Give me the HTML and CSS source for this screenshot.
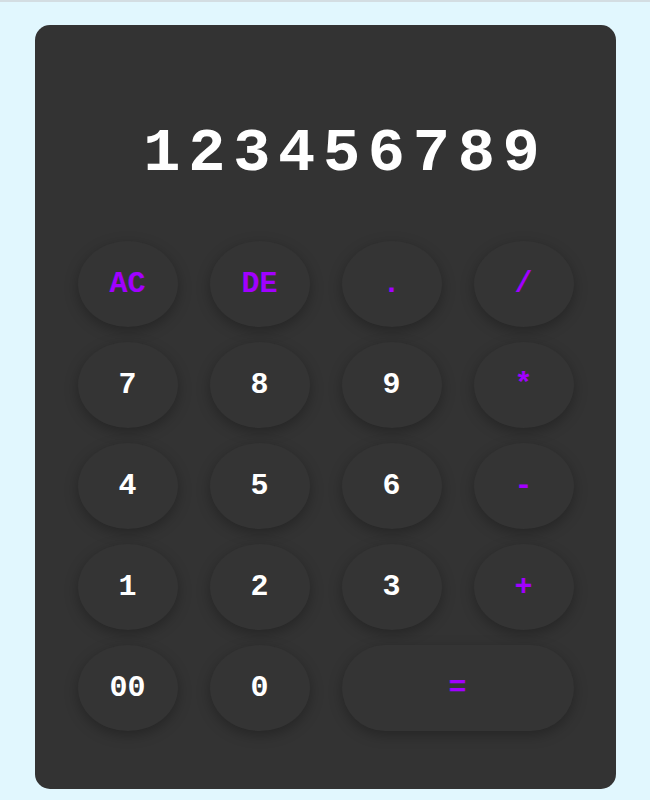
FILE: index.html
```html
<!DOCTYPE html>
<html lang="en">
<head>
<meta charset="utf-8">
<title>Calculator</title>
<link rel="stylesheet" href="styles.css">
</head>
<body>
<div class="topline"></div>
<main class="calc">
  <div class="display">123456789</div>
  <div class="keys">
    <button class="key op">AC</button>
    <button class="key op">DE</button>
    <button class="key op">.</button>
    <button class="key op">/</button>
    <button class="key">7</button>
    <button class="key">8</button>
    <button class="key">9</button>
    <button class="key op">*</button>
    <button class="key">4</button>
    <button class="key">5</button>
    <button class="key">6</button>
    <button class="key op">-</button>
    <button class="key">1</button>
    <button class="key">2</button>
    <button class="key">3</button>
    <button class="key op">+</button>
    <button class="key">00</button>
    <button class="key">0</button>
    <button class="key op wide">=</button>
  </div>
</main>
</body>
</html>
```
FILE: styles.css
```css
html {
  background: #e1f7fe;
}
body {
  margin: 0;
  min-height: 800px;
  font-family: "Liberation Mono", "Courier New", monospace;
}
.topline {
  height: 2px;
  background: #d3dde2;
}
.calc {
  width: 581px;
  height: 764px;
  margin: 23px auto 0;
  box-sizing: border-box;
  background: #333333;
  border-radius: 15px;
  padding: 0 42px 0 43px;
  display: flex;
  flex-direction: column;
}
.display {
  height: 216px;
  display: flex;
  align-items: center;
  justify-content: flex-end;
  padding-top: 40px;
  padding-right: 26px;
  color: #ffffff;
  font-weight: bold;
  font-size: 62px;
  letter-spacing: 7.7px;
  box-sizing: border-box;
}
.keys {
  display: grid;
  grid-template-columns: repeat(4, 100px);
  grid-auto-rows: 86px;
  column-gap: 32px;
  row-gap: 15px;
}
.key {
  border: none;
  border-radius: 50%;
  background: #343434;
  box-shadow: 0 4px 14px rgba(0, 0, 0, 0.28);
  color: #ffffff;
  font-family: "Liberation Mono", "Courier New", monospace;
  font-weight: bold;
  font-size: 30px;
  padding: 0;
}
.op {
  color: #a100ff;
}
.wide {
  grid-column: span 2;
  border-radius: 43px;
}
```
